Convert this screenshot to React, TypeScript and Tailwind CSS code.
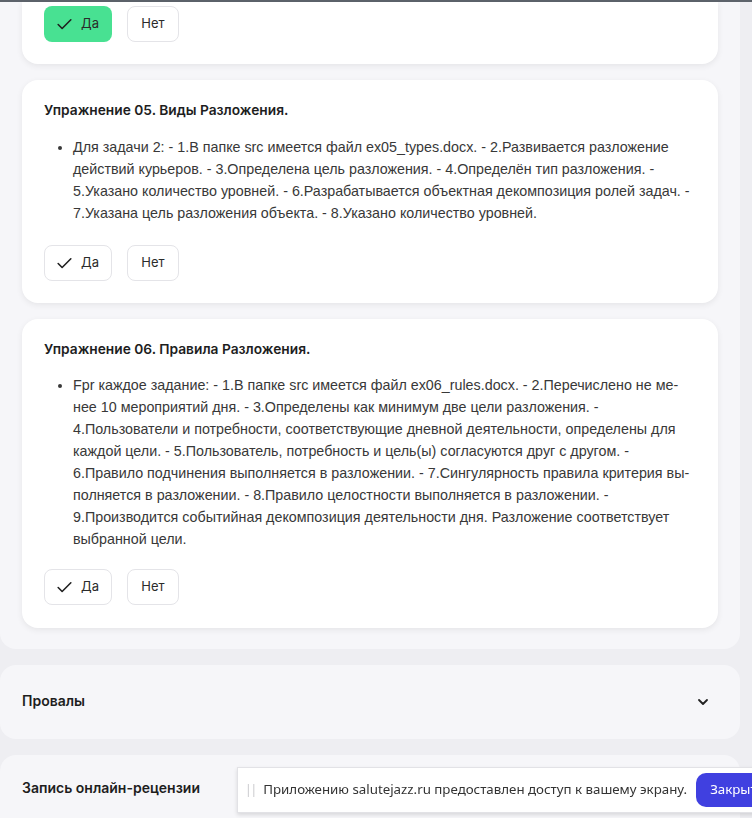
import { Check, ChevronDown } from "lucide-react";

const ui = "font-['Inter','Noto_Sans',sans-serif]";
const body = "font-['Liberation_Sans','Arial',sans-serif]";

const task5 = [
  "Для задачи 2: - 1.В папке src имеется файл ex05_types.docx. - 2.Развивается разложение",
  "действий курьеров. - 3.Определена цель разложения. - 4.Определён тип разложения. -",
  "5.Указано количество уровней. - 6.Разрабатывается объектная декомпозиция ролей задач. -",
  "7.Указана цель разложения объекта. - 8.Указано количество уровней.",
];

const task6 = [
  "Fpr каждое задание: - 1.В папке src имеется файл ex06_rules.docx. - 2.Перечислено не ме-",
  "нее 10 мероприятий дня. - 3.Определены как минимум две цели разложения. -",
  "4.Пользователи и потребности, соответствующие дневной деятельности, определены для",
  "каждой цели. - 5.Пользователь, потребность и цель(ы) согласуются друг с другом. -",
  "6.Правило подчинения выполняется в разложении. - 7.Сингулярность правила критерия вы-",
  "полняется в разложении. - 8.Правило целостности выполняется в разложении. -",
  "9.Производится событийная декомпозиция деятельности дня. Разложение соответствует",
  "выбранной цели.",
];

function Answer({ yes }: { yes?: boolean }) {
  return (
    <div className={`flex gap-[15px] ${ui} text-[13px] text-[#2b2b2b]`}>
      <button
        className={`h-9 w-[68px] rounded-lg flex items-center justify-center gap-[7px] pr-[2px] ${
          yes ? "bg-[#48e192]" : "bg-white border border-[#e4e4e8]"
        }`}
      >
        <Check size={19} strokeWidth={2} className="text-[#1f1f1f]" />
        <span>Да</span>
      </button>
      <button className="h-9 w-[52px] rounded-lg bg-white border border-[#e4e4e8]">Нет</button>
    </div>
  );
}

type ExerciseProps = { title: string; lines: string[]; list: string; gap: string; pb: string };

function Exercise({ title, lines, list, gap, pb }: ExerciseProps) {
  return (
    <div className={`bg-white rounded-2xl px-[22px] pt-[20px] ${pb} shadow-[0_2px_6px_rgba(0,0,0,0.07)]`}>
      <h3 className={`${ui} font-semibold text-[13.75px] leading-5 text-[#1e1e1e]`}>{title}</h3>
      <ul className={`${list} list-disc pl-[29px] ${body} text-[14.3px] leading-[22px] text-[#383838]`}>
        <li className="whitespace-nowrap">
          {lines.map((l, i) => (
            <span key={i}>
              {l}
              {i < lines.length - 1 && <br />}
            </span>
          ))}
        </li>
      </ul>
      <div className={gap}>
        <Answer />
      </div>
    </div>
  );
}

export default function App() {
  return (
    <div className="min-h-screen bg-[#eeeef2] overflow-hidden">
      <div className="h-[2px] bg-[#5d636b]" />
      <div className="w-[740px] flex flex-col gap-4">
        <div className="bg-[#f6f6f9] rounded-b-2xl px-[22px] pb-[21px] flex flex-col gap-4">
          <div className="bg-white rounded-b-2xl px-[22px] pt-[4px] pb-[22px] shadow-[0_2px_6px_rgba(0,0,0,0.07)]">
            <Answer yes />
          </div>
          <Exercise
            title="Упражнение 05. Виды Разложения."
            lines={task5}
            list="mt-[16px]"
            gap="mt-[21px]"
            pb="pb-[22px]"
          />
          <Exercise
            title="Упражнение 06. Правила Разложения."
            lines={task6}
            list="mt-[15px]"
            gap="mt-[19px]"
            pb="pb-[23px]"
          />
        </div>

        <div className="bg-[#f6f6f9] rounded-2xl h-[74px] pl-[22px] pr-[29px] pb-[3px] flex items-center justify-between">
          <span className={`${ui} font-semibold text-[14px] text-[#1e1e1e]`}>Провалы</span>
          <ChevronDown size={16} strokeWidth={2.75} className="text-[#222] mt-[3px]" />
        </div>

        <div className="bg-[#f6f6f9] rounded-t-2xl h-[80px] px-[22px] pt-[23px]">
          <div className={`${ui} font-semibold text-[14px] leading-5 text-[#1e1e1e]`}>
            Запись онлайн-рецензии
          </div>
        </div>
      </div>

      <div className="fixed left-[237px] top-[767px] w-[530px] h-[46px] bg-white border border-[#e2e2e6] shadow-[0_2px_4px_rgba(0,0,0,0.12)] flex items-center pl-[7px] font-['Noto_Sans',sans-serif] text-[13.3px] text-[#333]">
        <span className="text-[#c8c8cc] text-[12px] tracking-[-1px] mr-[7px]">||</span>
        <span className="whitespace-nowrap">Приложению salutejazz.ru предоставлен доступ к вашему экрану.</span>
        <button className="ml-[9px] h-[34px] px-[14px] rounded-[10px] bg-[#4040e0] text-white whitespace-nowrap">
          Закрыть
        </button>
      </div>
    </div>
  );
}
